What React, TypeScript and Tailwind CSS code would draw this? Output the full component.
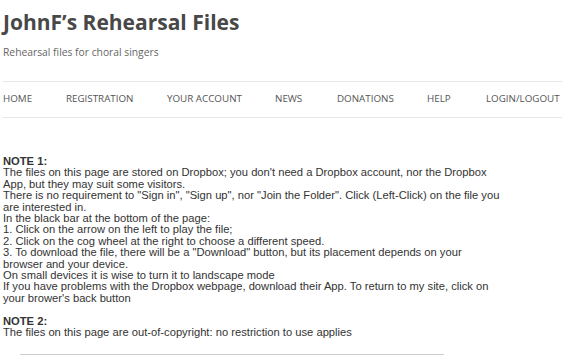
import React from "react";

const navItems = [
  { label: "HOME", w: "w-[63px]" },
  { label: "REGISTRATION", w: "w-[101px]" },
  { label: "YOUR ACCOUNT", w: "w-[108px]" },
  { label: "NEWS", w: "w-[62px]" },
  { label: "DONATIONS", w: "w-[90px]" },
  { label: "HELP", w: "w-[59px]" },
  { label: "LOGIN/LOGOUT", w: "" },
];

const note1 = [
  "The files on this page are stored on Dropbox; you don't need a Dropbox account, nor the Dropbox",
  "App, but they may suit some visitors.",
  'There is no requirement to "Sign in", "Sign up", nor "Join the Folder". Click (Left-Click) on the file you',
  "are interested in.",
  "In the black bar at the bottom of the page:",
  "1. Click on the arrow on the left to play the file;",
  "2. Click on the cog wheel at the right to choose a different speed.",
  '3. To download the file, there will be a "Download" button, but its placement depends on your',
  "browser and your device.",
  "On small devices it is wise to turn it to landscape mode",
  "If you have problems with the Dropbox webpage, download their App. To return to my site, click on",
  "your brower's back button",
];

export default function App() {
  return (
    <div className="w-[568px] h-[356px] overflow-hidden bg-white">
      <header className="pl-[3px] pr-[6px]">
        <h1 className="pt-[7px] font-['Open_Sans',sans-serif] text-[21px] font-bold leading-[30px] text-[#484848]">
          JohnF’s Rehearsal Files
        </h1>
        <p className="mt-[8px] font-['Open_Sans',sans-serif] text-[10.3px] leading-[14px] text-[#666]">
          Rehearsal files for choral singers
        </p>
        <nav className="mt-[22px] flex h-[37px] items-center border-y border-[#e6e6e6] font-['Open_Sans',sans-serif] text-[9.8px] text-[#555]">
          {navItems.map((item) => (
            <span key={item.label} className={`${item.w} whitespace-nowrap`}>
              {item.label}
            </span>
          ))}
        </nav>
      </header>

      <main className="mt-[38px] pl-[3px] font-['Liberation_Sans',Arial,sans-serif] text-[11.2px] leading-[11.4px] text-[#333]">
        <p className="font-bold">NOTE 1:</p>
        {note1.map((line) => (
          <p key={line} className="whitespace-nowrap">
            {line}
          </p>
        ))}
        <p className="mt-[11.4px] font-bold">NOTE 2:</p>
        <p className="whitespace-nowrap">The files on this page are out-of-copyright: no restriction to use applies</p>
        <div className="mt-[16px] ml-[17px] w-[424px] border-t border-[#ccc]" />
      </main>
    </div>
  );
}
